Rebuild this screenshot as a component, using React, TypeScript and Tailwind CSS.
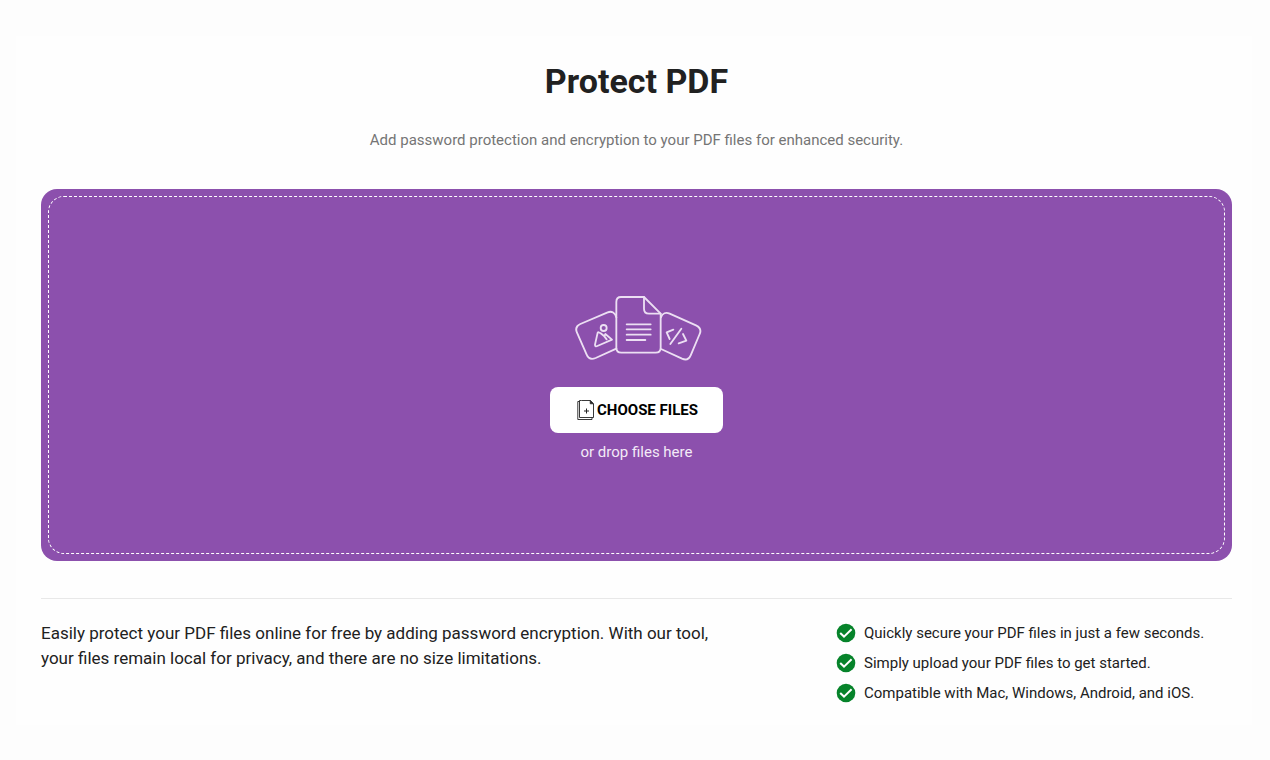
import { useRef } from "react";

const benefits = [
  "Quickly secure your PDF files in just a few seconds.",
  "Simply upload your PDF files to get started.",
  "Compatible with Mac, Windows, Android, and iOS.",
];

function FilesIllustration() {
  return (
    <svg
      viewBox="30 45 396 198"
      className="h-[66px] w-[132px] text-[#ecdff3]"
      fill="none"
      stroke="currentColor"
      strokeWidth="5.5"
      strokeLinecap="round"
      strokeLinejoin="round"
      aria-hidden="true"
    >
      <path d="M166 112 C163 98 152 92 140 97 L58 132 C47 137 43 147 48 158 L77 224 C82 236 92 239 104 234 L166 206" />
      <path d="M300 112 C304 99 315 96 326 101 L405 136 C417 142 421 151 416 162 L389 226 C384 238 375 241 363 236 L300 207" />
      <path d="M180 51 H249 L299 101 V203 Q299 218 284 218 H181 Q166 218 166 203 V66 Q166 51 180 51 Z" />
      <path d="M249 51 V86 Q249 101 264 101 H299" />
      <path d="M197 133 H269 M197 148 H269 M197 164 H269 M197 180 H253" />
      <circle cx="128" cy="144" r="9" />
      <path d="M110 158 L102 194 Q102 201 109 198 L153 179 L133 162 L130 169 L119 160 Q112 155 110 158 Z M130 169 L137 178" />
      <path d="M337 149 L317 157 L326 177 M361 146 L328 192 M366 162 L376 182 L353 190" />
    </svg>
  );
}

function AddFileIcon() {
  return (
    <svg viewBox="0 0 18 22" className="h-[22px] w-[18px] text-[#222222]" fill="none" stroke="currentColor" aria-hidden="true">
      <path d="M4.6 1.5 H13.2 L16.5 4.8 V18.5 H2.5 V1.5 Z" strokeWidth="0.9" />
      <path d="M13.2 1.5 V4.8 H16.5 Z" fill="currentColor" strokeWidth="0.7" />
      <path d="M2.5 2.5 H0.8 V20.5 H15 V18.5" strokeWidth="0.9" />
      <path d="M9.5 9.5 V14.5 M7 12 H12" strokeWidth="1" />
    </svg>
  );
}

function CheckIcon() {
  return (
    <svg viewBox="0 0 20 20" className="size-5 shrink-0" aria-hidden="true">
      <circle cx="10" cy="10" r="9.3" fill="#06832a" />
      <path d="M4.2 10 L8 13.6 L15.6 6.2" fill="none" stroke="white" strokeWidth="2" />
    </svg>
  );
}

export default function App() {
  const fileInput = useRef<HTMLInputElement>(null);

  return (
    <div className="min-h-screen bg-[#fdfdfd] pt-9 pr-[18px] pb-9 pl-4 font-['Roboto',sans-serif] text-[#212121]">
      <main className="bg-[#fefefe] pt-6 pr-5 pb-5 pl-[25px]">
        <header className="text-center">
          <h1 className="text-[34px] leading-[42px] font-bold">Protect PDF</h1>
          <p className="mt-[26px] text-[15px] leading-6 text-[#757575]">
            Add password protection and encryption to your PDF files for enhanced security.
          </p>
        </header>

        <section className="mt-[37px] rounded-2xl bg-[#8c50ad] p-[7px]" aria-label="File upload">
          <div className="flex min-h-[358px] flex-col items-center rounded-2xl border border-dashed border-white pt-[98px] pb-[89px]">
            <FilesIllustration />
            <button
              type="button"
              onClick={() => fileInput.current?.click()}
              className="mt-[26px] flex h-[46px] items-center justify-center gap-[2px] rounded-lg bg-white pr-[25px] pl-[27px] text-[15px] font-bold text-black"
            >
              <AddFileIcon />
              CHOOSE FILES
            </button>
            <input ref={fileInput} type="file" accept="application/pdf" multiple hidden aria-label="Choose files" />
            <p className="mt-[7px] text-[15px] leading-6 text-[#f3eaf7]">or drop files here</p>
          </div>
        </section>

        <section className="mt-[37px] flex justify-between border-t border-[#e8e8e8] pt-[22px]">
          <p className="w-[58%] text-[17px] leading-[25px]">
            Easily protect your PDF files online for free by adding password encryption. With our tool, your files
            remain local for privacy, and there are no size limitations.
          </p>
          <ul className="w-[396px] space-y-[6px] text-[15px] leading-6">
            {benefits.map((benefit) => (
              <li key={benefit} className="flex items-center gap-2">
                <CheckIcon />
                {benefit}
              </li>
            ))}
          </ul>
        </section>
      </main>
    </div>
  );
}
